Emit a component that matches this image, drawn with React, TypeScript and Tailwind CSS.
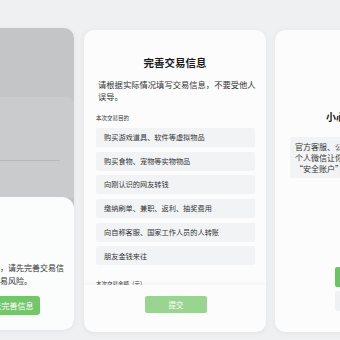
const options = [
  "购买游戏道具、软件等虚拟物品",
  "购买食物、宠物等实物物品",
  "向刚认识的网友转钱",
  "缴纳刷单、兼职、返利、抽奖费用",
  "向自称客服、国家工作人员的人转账",
  "朋友金钱来往",
];

function LeftCard() {
  return (
    <div className="ml-[-50px] flex h-[302px] w-[124px] shrink-0 flex-col overflow-hidden rounded-[10px] bg-[#c4c5c7] shadow-[0_1px_6px_rgba(0,0,0,0.05)]">
      {/* dimmed page */}
      <div className="h-[69px] pl-[10px] pt-[52px]">
        <div className="whitespace-nowrap text-[7.5px] leading-[10px] text-[#4d4e50]">
          <span className="inline-block w-[52px]">交易信息</span>
        </div>
      </div>
      <div className="h-[101px] rounded-tr-[8px] bg-[#cacbcd] pl-[10px] pr-[14px] pt-[63px]">
        <div className="h-px bg-[#b7b8ba]" />
      </div>
      {/* sheet */}
      <div className="-mt-px flex flex-1 flex-col rounded-t-[12px] bg-[#fbfcfc] pl-[10px] pt-[64px]">
        <div className="whitespace-nowrap text-[8px] leading-[13px] text-[#333]">
          为避免风险，请先完善交易信
        </div>
        <div className="whitespace-nowrap text-[8px] leading-[13px] text-[#333]">
          息，防范交易风险。
        </div>
        <div className="ml-[27px] mt-[9px] flex h-[19px] w-[53px] items-center justify-center rounded-[3px] bg-[#74c66b] text-[8px] text-white">
          去完善信息
        </div>
      </div>
    </div>
  );
}

function MiddleCard() {
  return (
    <div className="ml-[10px] mt-[2px] flex h-[302px] w-[182px] shrink-0 flex-col overflow-hidden rounded-[10px] bg-[#fcfcfd] shadow-[0_1px_6px_rgba(0,0,0,0.06)]">
      <div className="h-[255px] overflow-hidden pt-[27px]">
        <div className="text-center text-[10.5px] font-semibold leading-[12px] text-[#1a1a1a]">
          完善交易信息
        </div>
        <div className="mt-[9px] pl-[14px] text-[8.3px] leading-[12px] text-[#333]">
          请根据实际情况填写交易信息，不要受他人
          <br />
          误导。
        </div>
        <div className="mt-[12px] pl-[12px] text-[5.5px] leading-[8px] text-[#333]">
          本次交易目的
        </div>
        <div className="mt-[6px] flex flex-col gap-[4.7px] pl-[12px] pr-[11px]">
          {options.map((o) => (
            <div
              key={o}
              className="flex h-[19px] items-center rounded-[2px] bg-[#f2f3f5] pl-[8px] text-[7.2px] text-[#333]"
            >
              {o}
            </div>
          ))}
        </div>
        <div className="mt-[15px] pl-[12px] text-[5.5px] leading-[8px] text-[#333]">
          本次交易金额（元）
        </div>
      </div>
      <div className="flex flex-1 justify-center pt-[11px] shadow-[0_-2px_5px_rgba(0,0,0,0.04)]">
        <div className="ml-[2px] flex h-[17px] w-[62px] items-center justify-center rounded-[2px] bg-[#9ad491] text-[7.5px] text-white">
          提交
        </div>
      </div>
    </div>
  );
}

function RightCard() {
  return (
    <div className="ml-[9px] mt-[2px] flex h-[302px] w-[182px] shrink-0 flex-col overflow-hidden rounded-[10px] bg-[#fcfcfd] pt-[81px] shadow-[0_1px_6px_rgba(0,0,0,0.06)]">
      <div className="text-center text-[10px] font-semibold leading-[12px] text-[#1a1a1a]">
        小心遭遇诈骗风险
      </div>
      <div className="mx-[15px] mt-[14px] h-[41px] rounded-[2px] bg-[#f2f3f5] px-[5px] py-[4px] text-[8px] leading-[11px] text-[#333]">
        <div className="whitespace-nowrap">官方客服、公检法不会通过</div>
        <div className="whitespace-nowrap">个人微信让你转账到所谓的</div>
        <div className="whitespace-nowrap">“安全账户”，谨防诈骗。</div>
      </div>
      <div className="mx-auto mt-[89px] flex h-[20px] w-[62px] items-center justify-center rounded-[2px] bg-[#6cc364] text-[7.5px] text-white">
        我知道了
      </div>
      <div className="mx-auto mt-[4px] flex h-[20px] w-[62px] items-center justify-center rounded-[2px] bg-[#f0f1f3] text-[7.5px] text-[#333]">
        返回
      </div>
    </div>
  );
}

export default function App() {
  return (
    <div className="flex h-[340px] w-[340px] items-start overflow-hidden bg-[#eff0f2] pt-[28px] font-['Noto_Sans_CJK_SC',sans-serif]">
      <LeftCard />
      <MiddleCard />
      <RightCard />
    </div>
  );
}
